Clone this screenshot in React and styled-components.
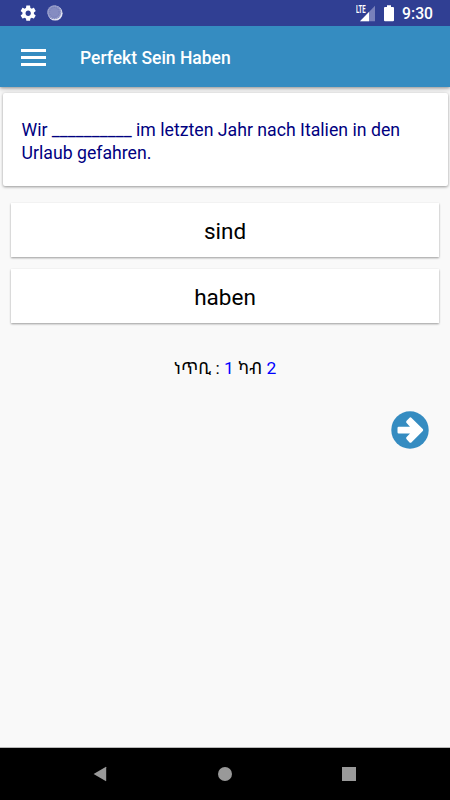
import React from 'react';
import styled, { createGlobalStyle } from 'styled-components';

const options = ['sind', 'haben'];

export default function App() {
    return (
        <Screen>
            <GlobalStyle />

            <StatusBar>
                <StatusIcons>
                    <GearIcon />
                    <SyncIcon />
                </StatusIcons>

                <StatusIcons>
                    <SignalIcon />
                    <BatteryIcon />
                    <Clock>9:30</Clock>
                </StatusIcons>
            </StatusBar>

            <Header>
                <MenuButton aria-label="Menu">
                    <MenuLine />
                    <MenuLine />
                    <MenuLine />
                </MenuButton>
                <Title>Perfekt Sein Haben</Title>
            </Header>

            <Content>
                <Question>
                    Wir __________ im letzten Jahr nach Italien in den Urlaub gefahren.
                </Question>

                <Options>
                    {options.map(option => (
                        <Option key={option}>{option}</Option>
                    ))}
                </Options>

                <Score>
                    ነጥቢ : <Points>1</Points> ካብ <Points>2</Points>
                </Score>

                <NextButton aria-label="Next">
                    <ArrowIcon />
                </NextButton>
            </Content>

            <NavBar>
                <svg width="14" height="16" viewBox="0 0 14 16">
                    <path d="M0.6 8 L12.6 0.9 Q13.2 0.6 13.2 1.2 V14.8 Q13.2 15.4 12.6 15.1 Z" fill="#999999" />
                </svg>
                <HomeDot />
                <RecentSquare />
            </NavBar>
        </Screen>
    );
}

function GearIcon() {
    return (
        <svg width="18.4" height="18.4" viewBox="0 0 24 24" fill="#FFFFFF">
            <path d="M19.43 12.98c.04-.32.07-.64.07-.98s-.03-.66-.07-.98l2.11-1.65c.19-.15.24-.42.12-.64l-2-3.46c-.12-.22-.39-.3-.61-.22l-2.49 1c-.52-.4-1.08-.73-1.69-.98l-.38-2.65C14.46 2.18 14.25 2 14 2h-4c-.25 0-.46.18-.49.42l-.38 2.65c-.61.25-1.17.59-1.69.98l-2.49-1c-.23-.09-.49 0-.61.22l-2 3.46c-.13.22-.07.49.12.64l2.11 1.65c-.04.32-.07.65-.07.98s.03.66.07.98l-2.11 1.65c-.19.15-.24.42-.12.64l2 3.46c.12.22.39.3.61.22l2.49-1c.52.4 1.08.73 1.69.98l.38 2.65c.03.24.24.42.49.42h4c.25 0 .46-.18.49-.42l.38-2.65c.61-.25 1.17-.59 1.69-.98l2.49 1c.23.09.49 0 .61-.22l2-3.46c.12-.22.07-.49-.12-.64l-2.11-1.65zM12 15.5c-1.93 0-3.5-1.57-3.5-3.5s1.57-3.5 3.5-3.5 3.5 1.57 3.5 3.5-1.57 3.5-3.5 3.5z" />
        </svg>
    );
}

function SyncIcon() {
    return (
        <svg width="16" height="16" viewBox="0 0 16 16">
            <circle cx="8.2" cy="8.2" r="7.4" fill="#E4E6F2" />
            <circle cx="7.3" cy="7.3" r="7" fill="#858CC1" />
            <circle cx="7.3" cy="7.3" r="6.3" fill="none" stroke="#B5B9DA" strokeWidth="1" strokeDasharray="1 1" />
            <circle cx="7.3" cy="7.3" r="4.8" fill="none" stroke="#7178B5" strokeWidth="0.8" strokeDasharray="1 1" />
        </svg>
    );
}

function SignalIcon() {
    return (
        <Signal>
            <svg width="20" height="17" viewBox="0 0 20 17">
                <path d="M19 0.7 V16.3 H4 Z" fill="#7981BB" />
                <path d="M13 6.9 V16.3 H4 Z" fill="#FFFFFF" />
                <path d="M0 0 H11 V7 L9.5 8.6 H0 Z" fill="#303F93" />
            </svg>
            <SignalLabel>LTE</SignalLabel>
        </Signal>
    );
}

function BatteryIcon() {
    return (
        <Battery width="10" height="17" viewBox="0 0 10 17">
            <path d="M3 0.3 H7 V2 H9 Q10 2 10 3 V15.2 Q10 16.2 9 16.2 H1 Q0 16.2 0 15.2 V3 Q0 2 1 2 H3 Z" fill="#FFFFFF" />
        </Battery>
    );
}

function ArrowIcon() {
    return (
        <svg width="38" height="38" viewBox="0 0 38 38">
            <circle cx="19" cy="19" r="18.7" fill="#358CC1" />
            <path
                d="M7.7 15.7 H19 L15.6 12.1 Q14.5 11 15.6 9.8 L18.3 6.9 Q19.4 5.8 20.6 6.9 L31.8 18.1 Q32.7 19 31.8 20 L20.6 31.2 Q19.4 32.3 18.3 31.2 L15.6 28.3 Q14.5 27.1 15.6 26 L19 22.5 H7.7 Q6.5 22.5 6.5 21.3 V16.9 Q6.5 15.7 7.7 15.7 Z"
                fill="#FFFFFF"
            />
        </svg>
    );
}

const GlobalStyle = createGlobalStyle`
    body {
        margin: 0;
    }

    * {
        box-sizing: border-box;
    }
`;

const Screen = styled.div`
    background-color: #F9F9F9;

    display: flex;

    flex-direction: column;

    font-family: Roboto, "Noto Sans Ethiopic", sans-serif;

    height: 800px;

    overflow: hidden;

    width: 450px;
`;

const StatusBar = styled.div`
    align-items: center;

    background-color: #303F93;

    display: flex;

    height: 26px;

    justify-content: space-between;

    padding: 0px 17px 0px 19px;
`;

const StatusIcons = styled.div`
    align-items: center;

    display: flex;

    gap: 9.5px;
`;

const Signal = styled.div`
    display: flex;

    height: 17px;

    margin-right: -2px;

    position: relative;

    width: 20px;
`;

const SignalLabel = styled.span`
    color: #FFFFFF;

    font-size: 10px;

    font-weight: 700;

    left: 0px;

    line-height: 9px;

    position: absolute;

    top: 0px;

    transform: scaleX(0.6);

    transform-origin: left;
`;

const Battery = styled.svg`
    margin-right: -1px;
`;

const Clock = styled.span`
    color: #FFFFFF;

    font-size: 15.7px;

    font-weight: 500;

    line-height: 26px;

    padding-top: 2px;
`;

const Header = styled.header`
    align-items: center;

    background-color: #358CC1;

    box-shadow: 0px 1px 3px rgba(0, 0, 0, 0.35), 0px 3px 8px rgba(0, 0, 0, 0.12);

    clip-path: inset(0px 0px -12px 0px);

    display: flex;

    flex-shrink: 0;

    gap: 34px;

    height: 61px;

    padding: 2px 21px 0px;
`;

const MenuButton = styled.button`
    background: none;

    border: none;

    display: flex;

    flex-direction: column;

    gap: 4px;

    padding: 0px;

    width: 25px;
`;

const MenuLine = styled.span`
    background-color: #FFFFFF;

    height: 3px;

    width: 100%;
`;

const Title = styled.h1`
    color: #FFFFFF;

    font-size: 17.5px;

    font-weight: 500;

    line-height: 24px;

    margin: 0px;
`;

const Content = styled.main`
    display: flex;

    flex-direction: column;

    flex-grow: 1;

    padding-top: 6px;

    position: relative;
`;

const Question = styled.div`
    background-color: #FFFFFF;

    border-radius: 2px;

    box-shadow: 0px 1px 3px rgba(0, 0, 0, 0.4);

    color: #000080;

    font-size: 17.7px;

    height: 93px;

    line-height: 23px;

    margin: 0px 2.5px;

    padding: 26px 19px;
`;

const Options = styled.div`
    display: flex;

    flex-direction: column;

    gap: 12px;

    padding: 17px 11px 0px;
`;

const Option = styled.button`
    background-color: #FFFFFF;

    border: none;

    box-shadow: 0px 1px 2px rgba(0, 0, 0, 0.38);

    color: #000000;

    font-family: inherit;

    font-size: 22.5px;

    height: 54px;

    padding: 1px 0px 0px;
`;

const Score = styled.div`
    color: #000000;

    font-size: 17.4px;

    line-height: 24px;

    margin-top: 33px;

    text-align: center;
`;

const Points = styled.span`
    color: #0000FF;
`;

const NextButton = styled.button`
    align-self: flex-end;

    background: none;

    border: none;

    display: flex;

    margin: 31px 21.5px 0px 0px;

    padding: 0px;
`;

const NavBar = styled.nav`
    align-items: center;

    background-color: #000000;

    border-top: 1px solid #B8B8B8;

    display: flex;

    height: 53px;

    justify-content: space-between;

    padding: 0px 94px 0px 93px;
`;

const HomeDot = styled.span`
    background-color: #999999;

    border-radius: 50%;

    height: 14px;

    width: 14px;
`;

const RecentSquare = styled.span`
    background-color: #999999;

    height: 14px;

    width: 14px;
`;
